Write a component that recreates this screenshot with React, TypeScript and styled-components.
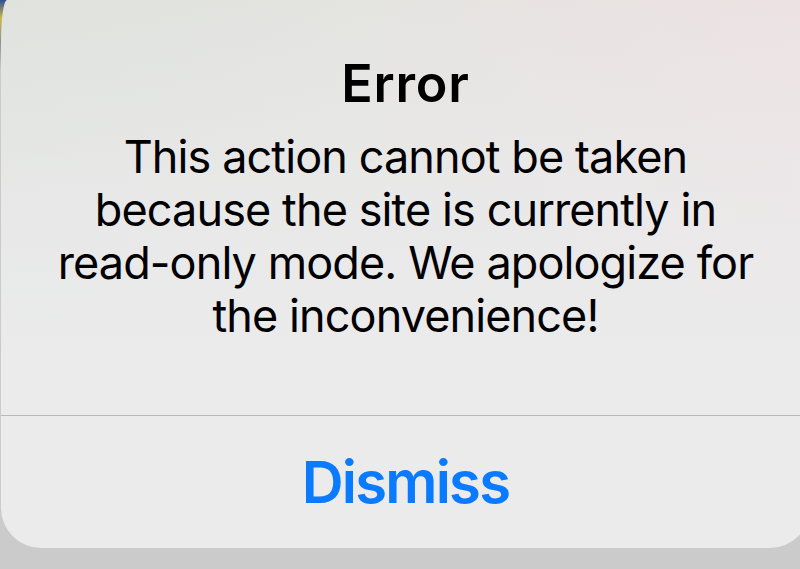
import React from "react";
import styled, { createGlobalStyle } from "styled-components";

const Global = createGlobalStyle`
  html, body {
    margin: 0;
    padding: 0;
    width: 800px;
    height: 569px;
    overflow: hidden;
  }
  body {
    background:
      linear-gradient(to bottom, #2d4f96 0px, #cdb845 18px, #8d8f95 42px, #cbcbcb 70px, #cbcbcb 100%);
    font-family: Inter, "Noto Sans", "Liberation Sans", sans-serif;
    -webkit-font-smoothing: antialiased;
  }
`;

const Page = styled.div`
  width: 800px;
  height: 569px;
  display: flex;
  flex-direction: column;
  overflow: hidden;
`;

const Alert = styled.div`
  margin-left: 1px;
  width: 809px;
  height: 548px;
  flex: none;
  display: flex;
  flex-direction: column;
  border-radius: 6px 0 40px 40px / 42px 0 40px 40px;
  background:
    linear-gradient(to bottom, rgba(235, 235, 236, 0) 0px, rgba(235, 235, 236, 0.6) 180px, #ebebec 360px),
    linear-gradient(to right, #dfe2dd 0%, #e4e4e1 45%, #ede2e3 100%);
  overflow: hidden;
`;

const Content = styled.div`
  width: 100%;
  padding: 54px 0 73px;
  display: flex;
  flex-direction: column;
  align-items: center;
  text-align: center;
  color: #000;
`;

const Title = styled.h1`
  margin: 0;
  font-size: 52px;
  line-height: 60px;
  font-weight: 600;
  letter-spacing: 0.8px;
`;

const Message = styled.p`
  margin: 16px 0 0;
  font-size: 45px;
  line-height: 53px;
  font-weight: 400;
  letter-spacing: -0.9px;
`;

const Separator = styled.div`
  width: 100%;
  height: 1px;
  background: #b9b9ba;
`;

const Button = styled.button`
  width: 100%;
  height: 132px;
  border: 0;
  padding: 0;
  background: transparent;
  font-family: Inter, "Noto Sans", "Liberation Sans", sans-serif;
  font-size: 58px;
  line-height: 132px;
  font-weight: 600;
  color: #0a7aff;
  letter-spacing: -1.8px;
  cursor: pointer;
`;

export default function App() {
  return (
    <>
      <Global />
      <Page>
        <Alert>
          <Content>
            <Title>Error</Title>
            <Message>
              This action cannot be taken
              <br />
              because the site is currently in
              <br />
              read-only mode. We apologize for
              <br />
              the inconvenience!
            </Message>
          </Content>
          <Separator />
          <Button>Dismiss</Button>
        </Alert>
      </Page>
    </>
  );
}
